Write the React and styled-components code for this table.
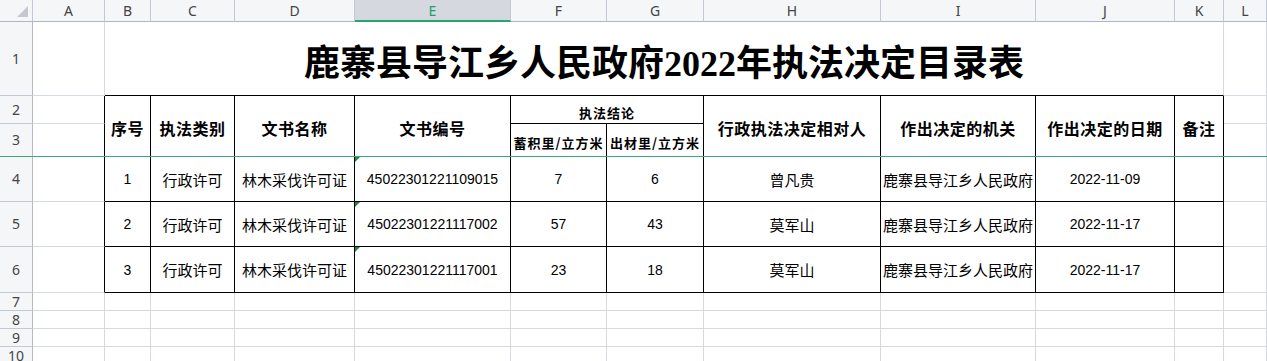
import React from "react";
import styled, { createGlobalStyle, css } from "styled-components";

const GRID = "#d6d9e2";
const HEAD_BG = "#f5f6f8";
const HEAD_LINE = "#c3c8d4";
const INK = "#000";

const Global = createGlobalStyle`
  html, body { margin: 0; padding: 0; background: #fff; }
  body { overflow: hidden; }
`;

const place = css`
  grid-column: ${(p) => p.$c} / span ${(p) => p.$cs || 1};
  grid-row: ${(p) => p.$r} / span ${(p) => p.$rs || 1};
`;

const Sheet = styled.div`
  position: relative;
  display: grid;
  grid-template-columns: 33px 72px 46px 84px 120px 156px 96px 97px 177px 155px 139px 49px 43px;
  grid-template-rows: 22px 74px 28px 33px 45px 45px 46px 18px 18px 18px 18px;
  width: 1267px;
  height: 361px;
  overflow: hidden;
  background: #fff;
  font-family: "Liberation Sans", "Noto Sans CJK SC", sans-serif;
`;

const Corner = styled.div`
  ${place};
  box-sizing: border-box;
  background: ${HEAD_BG};
  border-right: 1px solid ${HEAD_LINE};
  border-bottom: 1px solid #aeb5c6;
  display: flex;
  align-items: flex-end;
  justify-content: flex-end;
  padding: 0 4px 4px 0;
`;

const ColHead = styled.div`
  ${place};
  box-sizing: border-box;
  display: flex;
  align-items: center;
  justify-content: center;
  font-family: "Noto Sans", "Open Sans", sans-serif;
  font-size: 14px;
  color: ${(p) => (p.$selected ? "#1f9d6b" : "#444")};
  background: ${(p) => (p.$selected ? "#d5d8df" : HEAD_BG)};
  border-right: 1px solid ${HEAD_LINE};
  border-bottom: ${(p) => (p.$selected ? "2px solid #22a86f" : "1px solid #aeb5c6")};
  padding-top: ${(p) => (p.$selected ? "1px" : "0")};
`;

const RowHead = styled.div`
  ${place};
  box-sizing: border-box;
  display: flex;
  align-items: center;
  justify-content: center;
  font-family: "Noto Sans", "Open Sans", sans-serif;
  font-size: 14px;
  line-height: 1;
  color: #444;
  background: ${HEAD_BG};
  border-right: 1px solid #b4bacb;
  border-bottom: 1px solid ${HEAD_LINE};
`;

const Blank = styled.div`
  ${place};
  box-sizing: border-box;
  border-right: 1px solid ${(p) => (p.$edge ? INK : GRID)};
  border-bottom: 1px solid ${GRID};
`;

const TitleCell = styled.div`
  ${place};
  box-sizing: border-box;
  display: flex;
  align-items: center;
  justify-content: center;
  border-right: 1px solid ${GRID};
  border-bottom: 1px solid ${INK};
  font-family: "Liberation Serif", "Noto Sans CJK SC", serif;
  font-weight: 700;
  font-size: 36px;
  color: #000;
  padding-top: 2px;
`;

const HeadCell = styled.div`
  ${place};
  box-sizing: border-box;
  display: flex;
  align-items: center;
  justify-content: center;
  text-align: center;
  border-right: 1px solid ${INK};
  border-bottom: 1px solid ${INK};
  font-family: "Noto Sans CJK SC", sans-serif;
  font-weight: 700;
  font-size: ${(p) => (p.$small ? "13px" : "16px")};
  letter-spacing: ${(p) => (p.$small ? "1px" : "0.5px")};
  color: #000;
  white-space: nowrap;
  padding-top: ${(p) => (p.$small ? "5px" : "4px")};
`;

const DataCell = styled.div`
  ${place};
  position: relative;
  box-sizing: border-box;
  display: flex;
  align-items: center;
  justify-content: center;
  border-right: 1px solid ${INK};
  border-bottom: 1px solid ${INK};
  font-family: "Liberation Sans", "Noto Sans CJK SC", sans-serif;
  font-size: ${(p) => (p.$num ? "14px" : "15px")};
  color: #000;
  white-space: nowrap;

  ${(p) =>
    p.$flag &&
    css`
      &::before {
        content: "";
        position: absolute;
        top: 0;
        left: 0;
        width: 0;
        height: 0;
        border-top: 5px solid #1f8a3c;
        border-right: 5px solid transparent;
      }
    `}
`;

const FreezeLine = styled.div`
  position: absolute;
  left: 0;
  right: 0;
  top: 156px;
  height: 1px;
  background: #3ea67c;
`;

const cols = ["A", "B", "C", "D", "E", "F", "G", "H", "I", "J", "K", "L"];

const rows = [
  ["1", "行政许可", "林木采伐许可证", "45022301221109015", "7", "6", "曾凡贵", "鹿寨县导江乡人民政府", "2022-11-09", ""],
  ["2", "行政许可", "林木采伐许可证", "45022301221117002", "57", "43", "莫军山", "鹿寨县导江乡人民政府", "2022-11-17", ""],
  ["3", "行政许可", "林木采伐许可证", "45022301221117001", "23", "18", "莫军山", "鹿寨县导江乡人民政府", "2022-11-17", ""],
];

const isNum = (v) => /^[0-9-]+$/.test(v);

export default function App() {
  const rowNums = [1, 2, 3, 4, 5, 6, 7, 8, 9, 10];
  return (
    <>
      <Global />
      <Sheet>
        <Corner $c={1} $r={1}>
          <svg width="11" height="11" viewBox="0 0 11 11">
            <polygon points="11,0 11,11 0,11" fill="#c5c8cf" />
          </svg>
        </Corner>
        {cols.map((l, i) => (
          <ColHead key={l} $c={i + 2} $r={1} $selected={l === "E"}>
            {l}
          </ColHead>
        ))}
        {rowNums.map((n) => (
          <RowHead key={n} $c={1} $r={n + 1}>
            {n}
          </RowHead>
        ))}

        {rowNums.map((n) => (
          <Blank key={"A" + n} $c={2} $r={n + 1} $edge={n >= 2 && n <= 6} />
        ))}

        <TitleCell $c={3} $cs={10} $r={2}>
          鹿寨县导江乡人民政府2022年执法决定目录表
        </TitleCell>

        <HeadCell $c={3} $r={3} $rs={2}>序号</HeadCell>
        <HeadCell $c={4} $r={3} $rs={2}>执法类别</HeadCell>
        <HeadCell $c={5} $r={3} $rs={2}>文书名称</HeadCell>
        <HeadCell $c={6} $r={3} $rs={2}>文书编号</HeadCell>
        <HeadCell $c={7} $cs={2} $r={3} $small>执法结论</HeadCell>
        <HeadCell $c={7} $r={4} $small>蓄积里/立方米</HeadCell>
        <HeadCell $c={8} $r={4} $small>出材里/立方米</HeadCell>
        <HeadCell $c={9} $r={3} $rs={2}>行政执法决定相对人</HeadCell>
        <HeadCell $c={10} $r={3} $rs={2}>作出决定的机关</HeadCell>
        <HeadCell $c={11} $r={3} $rs={2}>作出决定的日期</HeadCell>
        <HeadCell $c={12} $r={3} $rs={2}>备注</HeadCell>

        {rows.map((r, ri) =>
          r.map((v, ci) => (
            <DataCell
              key={ri + "-" + ci}
              $c={ci + 3}
              $r={ri + 5}
              $num={isNum(v)}
              $flag={ci === 3}
            >
              {v}
            </DataCell>
          ))
        )}

        {rowNums.map((n) => (
          <Blank key={"L" + n} $c={13} $r={n + 1} />
        ))}

        {[7, 8, 9, 10].map((n) =>
          cols.slice(1, 11).map((l, i) => (
            <Blank key={l + n} $c={i + 3} $r={n + 1} />
          ))
        )}

        <FreezeLine />
      </Sheet>
    </>
  );
}
